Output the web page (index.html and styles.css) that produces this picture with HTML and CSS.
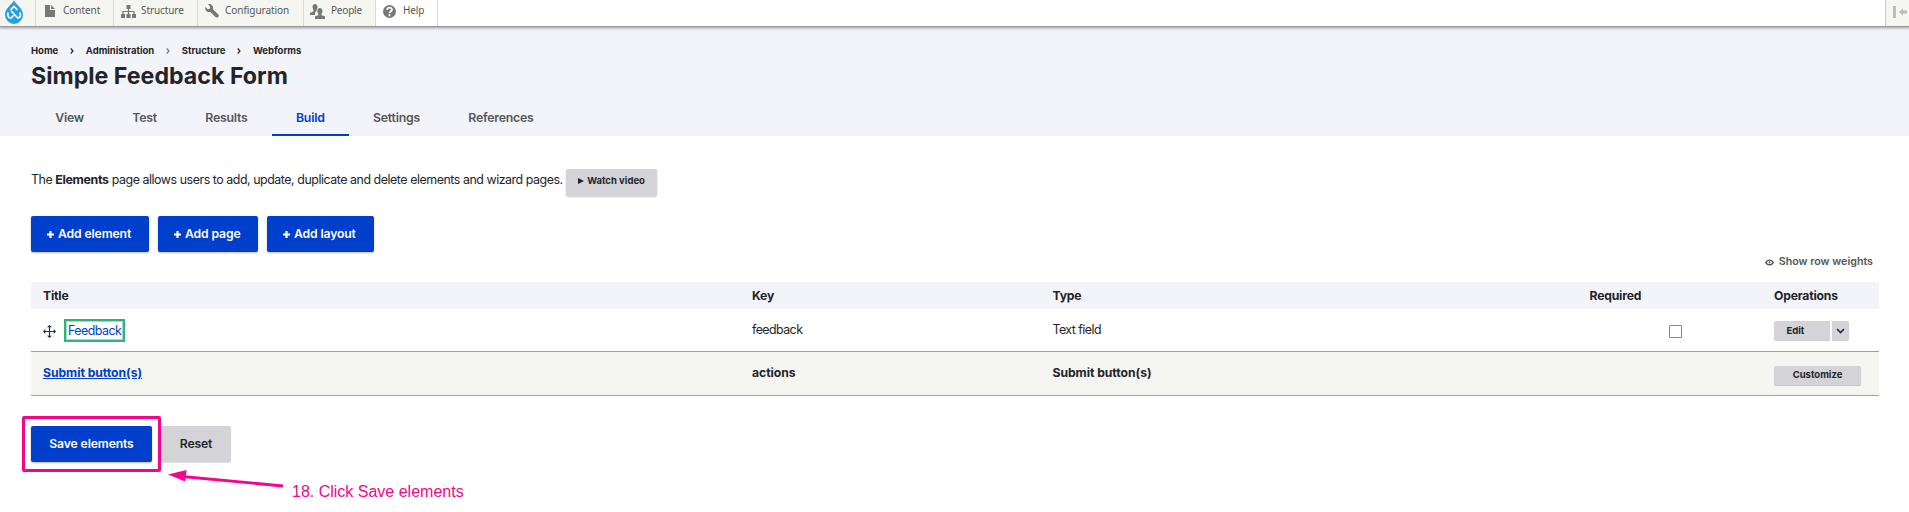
FILE: index.html
```
<!DOCTYPE html>
<html lang="en">
<head>
<meta charset="utf-8">
<title>Simple Feedback Form</title>
<link rel="stylesheet" href="styles.css">
</head>
<body>
<nav class="toolbar">
  <a class="tool logo"><svg width="18" height="24" viewBox="0 0 18 24"><path d="M9 0C8 4 0 7.500 0 15a9 9 0 0 0 18 0C18 7.500 10 4 9 0z" fill="#2a9fdf"/><path d="M5.500 10L9 6.500l3.500 3.500M6.200 11l6.300 6.800c3 .4 3.700-3 2.300-5.300M9.500 14.500l-3.200 3.300c-2.600.6-4.300-2-3.100-5.300" fill="none" stroke="#fff" stroke-width="1.700"/></svg></a>
  <a class="tool content"><svg width="10" height="12" viewBox="0 0 10 12"><path d="M0 0h5v5h5v7H0zM6 0l4 4H6z" fill="#777"/></svg>Content</a>
  <a class="tool structure"><svg width="15" height="13" viewBox="0 0 15 13"><path d="M5.500 0h4v4h-4zM0 9h4v4H0zM5.500 9h4v4h-4zM11 9h4v4h-4z" fill="#777"/><path d="M7.500 3v7M2 10V6.500h11V10" fill="none" stroke="#777" stroke-width="1.200"/></svg>Structure</a>
  <a class="tool config"><svg width="14" height="14" viewBox="0 0 14 14"><path d="M3 .3A4 4 0 0 1 8 5.200l5.300 5.300c1.500 2-.8 4-2.600 2.700L5.300 7.900A4 4 0 0 1 .3 3l2.400 2.300 2-.6.5-2z" fill="#777"/></svg>Configuration</a>
  <a class="tool people"><svg width="15" height="15" viewBox="0 0 15 15"><path d="M2.500 3c0-4 5-4 5 0 0 1.500-.8 2.200-.8 3.500L5 8.500V11H0V9l3.300-1.600C3.800 5.500 2.500 5 2.500 3zM7.300 7c0-4 5.200-4 5.200 0 0 2-1.200 2.300-1.200 4l3.700 1.500V15H5v-2.500L8.500 11C8.500 9.500 7.300 9 7.300 7z" fill="#777"/></svg>People</a>
  <a class="tool help"><svg width="13" height="13" viewBox="0 0 13 13"><circle cx="6.500" cy="6.500" r="6.500" fill="#777"/><path d="M4.200 5c0-3.200 4.800-3 4.800-.3C9 6.300 6.500 6.300 6.500 8.200M6.500 9.300v1.900" fill="none" stroke="#fff" stroke-width="1.800"/></svg>Help</a>
  <a class="tool toggle"><svg width="16" height="12" viewBox="0 0 16 12"><path d="M0 0h3v12H0zM6 6l4-4v2.500h4v3h-4V10z" fill="#bbb"/></svg></a>
</nav>
<header class="header">
  <div class="crumbs"><span>Home</span><svg class="sep" viewBox="0 0 4 6"><path d="M.7.500L3 3 .7 5.500"/></svg><span>Administration</span><svg class="sep light" viewBox="0 0 4 6"><path d="M.7.500L3 3 .7 5.500"/></svg><span>Structure</span><svg class="sep" viewBox="0 0 4 6"><path d="M.7.500L3 3 .7 5.500"/></svg><span>Webforms</span></div>
  <h1 class="title">Simple Feedback Form</h1>
  <div class="tabs"><a class="tab">View</a><a class="tab">Test</a><a class="tab">Results</a><a class="tab active">Build</a><a class="tab">Settings</a><a class="tab">References</a></div>
</header>
<main class="main">
  <div class="intro"><p class="desc">The <b>Elements</b> page allows users to add, update, duplicate and delete elements and wizard pages.</p><a class="watch"><svg width="6" height="6" viewBox="0 0 6 6"><path d="M0 0l6 3-6 3z" fill="#232429"/></svg>Watch video</a></div>
  <div class="actions">
    <a class="btn add"><svg class="plus" viewBox="0 0 7 7"><path d="M3.500 0v7M0 3.500h7"/></svg>Add element</a>
    <a class="btn add page"><svg class="plus" viewBox="0 0 7 7"><path d="M3.500 0v7M0 3.500h7"/></svg>Add page</a>
    <a class="btn add layout"><svg class="plus" viewBox="0 0 7 7"><path d="M3.500 0v7M0 3.500h7"/></svg>Add layout</a>
  </div>
  <div class="weights"><svg width="9" height="7" viewBox="0 0 9 7"><path d="M.7 3.500C2.500.3 6.500.3 8.300 3.500 6.500 6.700 2.500 6.700.7 3.500z" fill="none" stroke="#45464b" stroke-width="1.400"/><circle cx="4.500" cy="3.500" r=".9" fill="#45464b"/></svg>Show row weights</div>
  <section class="table">
    <div class="row head"><span>Title</span><span>Key</span><span>Type</span><span>Required</span><span>Operations</span></div>
    <div class="row item">
      <span class="name"><svg width="13" height="13" viewBox="0 0 13 13"><path d="M6.500 1v11M1 6.500h11" fill="none" stroke="#26304f" stroke-width="1.200"/><path d="M6.500 0l2.500 2.300H4zM6.500 13L4 10.700h5zM0 6.500L2.300 4v5zM13 6.500L10.700 9V4z" fill="#26304f"/></svg><a class="marked">Feedback</a></span>
      <span class="thin">feedback</span><span class="thin">Text field</span>
      <span><i class="check"></i></span>
      <span class="split"><a class="small edit">Edit</a><a class="small drop"><svg width="9" height="6" viewBox="0 0 9 6"><path d="M1 1l3.500 3.500L8 1" fill="none" stroke="#1b2750" stroke-width="1.600"/></svg></a></span>
    </div>
    <div class="row submit"><span><a class="link">Submit button(s)</a></span><span>actions</span><span>Submit button(s)</span><span></span><span class="split"><a class="small custom">Customize</a></span></div>
  </section>
  <div class="footer">
    <a class="btn save">Save elements</a><a class="btn reset">Reset</a>
    <i class="frame"></i>
    <svg class="arrow" width="116" height="20" viewBox="0 0 116 20"><path d="M14 6.500L115 16" stroke="#f5058d" stroke-width="2.800"/><path d="M0 4.500L18.500 0l-1.300 11.500z" fill="#f5058d"/></svg>
    <span class="note">18. Click Save elements</span>
  </div>
</main>
</body>
</html>
```
FILE: styles.css
```
* { box-sizing: border-box; }
body { margin: 0; height: 512px; overflow: hidden; background: #fff; color: #232429; font: 12px/18px Inter, sans-serif; }
svg { display: block; flex: none; }

.toolbar { position: relative; z-index: 1; display: flex; height: 26px; box-shadow: 0 0 0 1px #999, 0 1px 3px 1px #999; background: #fff; }
.tool { display: flex; align-items: flex-start; height: 26px; padding-top: 1px; background: #f5f5f1; border-right: 1px solid #d9d9d7; color: #565656; font: 10px/18px "Noto Sans", sans-serif; letter-spacing: -.05px; }
.logo { width: 36px; padding: 0 0 0 5px; }
.content { width: 78px; padding-left: 9px; gap: 8px; }
.content svg { margin-top: 4px; }
.structure { width: 84px; padding-left: 7px; gap: 5px; letter-spacing: -.1px; }
.structure svg { margin-top: 4px; }
.config { width: 106px; padding-left: 7px; gap: 6px; }
.config svg { margin-top: 3px; }
.people { width: 72px; padding-left: 6px; gap: 6px; letter-spacing: -.2px; }
.people svg { margin-top: 3px; }
.help { width: 62px; padding-left: 7px; gap: 7px; background: #fff; letter-spacing: -.1px; }
.help svg { margin-top: 4px; }
.toggle { width: 24px; margin-left: auto; padding: 6px 0 0 7px; border: 0; border-left: 1px solid #ccc; }

.header { height: 110px; padding: 17px 31px 0; background: #f3f4f9; }
.crumbs { display: flex; align-items: center; height: 15px; font-size: 9.5px; font-weight: 700; line-height: 15px; }
.sep { width: 4px; height: 6px; margin: 1px 12px 0 11.500px; fill: none; stroke: #232429; stroke-width: 1.200; }
.sep.light { stroke: #77787d; }
.title { margin: 3px 0 0; font-size: 23.200px; line-height: 30px; font-weight: 700; }
.tabs { display: flex; height: 45px; }
.tab { padding: 18px 24.200px 0; color: #55565b; font-size: 12.300px; font-weight: 600; letter-spacing: -.22px; line-height: 18px; }
.tab.active { color: #003ecc; border-bottom: 2px solid #003ecc; }

.main { padding: 33px 30px 0 31px; }
.intro { display: flex; height: 47px; gap: 3px; }
.desc { margin: 2px 0 0; font-size: 12.400px; letter-spacing: -.45px; }
.desc b { letter-spacing: -.32px; }
.watch { display: flex; align-items: center; gap: 3px; width: 91px; height: 27px; padding: 0 0 3px 12.500px; border-radius: 2px; background: #d4d4d8; box-shadow: 0 1px 2px #0003; font-size: 9.5px; font-weight: 700; }
.actions { display: flex; gap: 9px; }
.btn { display: flex; align-items: center; height: 36px; border-radius: 2px; background: #003ecc; color: #fff; box-shadow: 0 1px 2px #0004; font-size: 12.200px; font-weight: 600; letter-spacing: -.13px; }
.add { width: 118px; padding-left: 16px; gap: 4px; }
.page { width: 100px; }
.layout { width: 107px; }
.plus { width: 7px; height: 7px; margin-top: 1px; stroke: #fff; stroke-width: 2.200; }
.weights { display: flex; align-items: center; justify-content: flex-end; gap: 5px; height: 18px; margin-top: 1px; padding-right: 6px; color: #55565b; font-size: 10.700px; font-weight: 600; }
.table { margin-top: 11px; }
.row { display: grid; grid-template-columns: 709px 300.500px 537px 184.500px 1fr; align-items: center; padding-left: 12px; font-size: 12.200px; font-weight: 700; letter-spacing: -.05px; width: 1848px; }
.head { height: 27px; letter-spacing: -.2px; background: #f3f4f9; }
.item { height: 43px; border-bottom: 1px solid #a0a0a2; }
.submit { height: 44px; padding-bottom: 1px; background: #f5f5f1; border-bottom: 1px solid #a0a0a2; }
.name { display: flex; align-items: center; gap: 8px; }
.name svg { margin-top: 3px; }
.marked { width: 61px; height: 23px; padding-left: 2px; border: 2px solid #30b27b; box-shadow: inset 0 0 0 1px #a5dcc5; color: #003ecc; font-size: 12.400px; font-weight: 400; line-height: 19px; letter-spacing: -.5px; }
.thin { font-size: 12.400px; font-weight: 400; letter-spacing: -.55px; }
.link { color: #003ecc; text-decoration: underline; }
.check { display: block; width: 13px; height: 13px; margin: 2px 0 0 79.500px; border: 1px solid #85858c; border-radius: 1px; }
.split { display: flex; gap: 2px; margin-top: 1px; letter-spacing: 0; }
.small { display: flex; align-items: center; height: 19px; border-radius: 2px; background: #d4d4d8; box-shadow: 0 1px 1px #0003; font-size: 9.5px; font-weight: 700; }
.edit { width: 56px; padding-left: 12.500px; border-radius: 2px 0 0 2px; }
.drop { width: 17px; justify-content: center; border-radius: 0 2px 2px 0; }
.custom { width: 87px; justify-content: center; padding-bottom: 1px; margin-top: 3px; }

.footer { position: relative; display: flex; gap: 9px; margin-top: 30px; }
.save { width: 121px; justify-content: center; }
.reset { width: 70px; justify-content: center; background: #d4d4d8; color: #232429; box-shadow: 0 1px 1px #0002; }
.frame { position: absolute; left: -9px; top: -10px; width: 139px; height: 56px; border: 3px solid #f5058d; border-radius: 2px; }
.arrow { position: absolute; left: 137px; top: 44px; }
.note { position: absolute; left: 261px; top: 56px; color: #f5058d; font: 16px/20px "Liberation Sans", sans-serif; white-space: nowrap; }
```
